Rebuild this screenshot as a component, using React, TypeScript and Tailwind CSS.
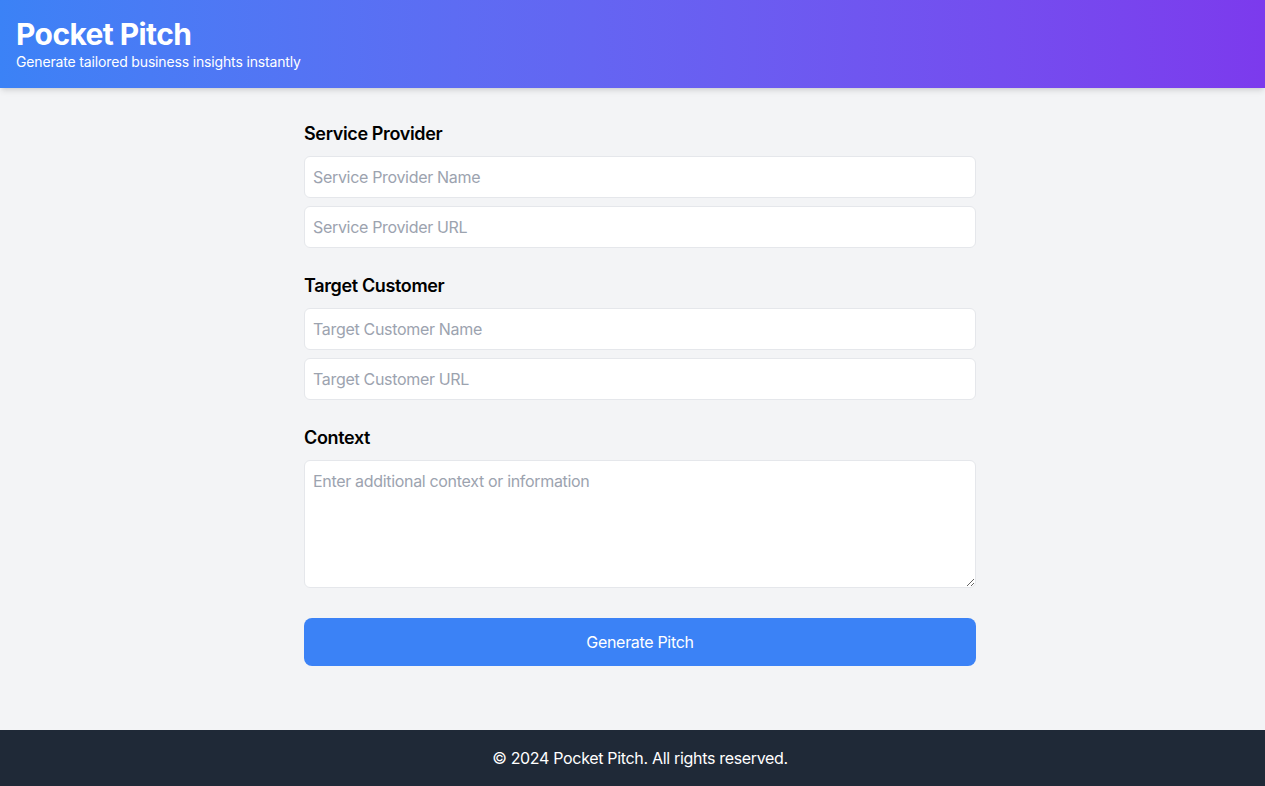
import React from "react";

export default function App() {
  const inputCls =
    "block w-full p-2 text-base leading-6 tracking-[-0.02em] bg-white border border-[#e5e7eb] rounded-md placeholder:text-[#9ca3af] text-gray-900 outline-none";
  const labelCls = "text-lg font-semibold leading-7 mb-2 text-black tracking-[-0.02em]";
  return (
    <div className="min-h-screen flex flex-col bg-[#f3f4f6] font-['Inter','Noto_Sans',sans-serif]">
      <header className="bg-gradient-to-r from-[#3b82f6] to-[#7c3aed] text-white p-4 shadow-md relative z-10">
        <h1 className="text-3xl font-bold leading-9 tracking-[-0.02em]">Pocket Pitch</h1>
        <p className="text-sm leading-5 tracking-[-0.011em]">Generate tailored business insights instantly</p>
      </header>
      <main className="flex-grow py-8 pl-[15px]">
        <div className="max-w-2xl mx-auto">
          <section className="mb-6">
            <h2 className={labelCls}>Service Provider</h2>
            <input className={inputCls + " mb-2"} placeholder="Service Provider Name" />
            <input className={inputCls} placeholder="Service Provider URL" />
          </section>
          <section className="mb-6">
            <h2 className={labelCls}>Target Customer</h2>
            <input className={inputCls + " mb-2"} placeholder="Target Customer Name" />
            <input className={inputCls} placeholder="Target Customer URL" />
          </section>
          <section className="mb-6">
            <h2 className={labelCls}>Context</h2>
            <textarea
              className="block w-full h-32 p-2 text-base leading-6 tracking-[-0.02em] bg-white border border-[#e5e7eb] rounded-md placeholder:text-[#9ca3af] outline-none"
              placeholder="Enter additional context or information"
            />
          </section>
          <button className="w-full mt-[6px] bg-[#3b82f6] text-white text-base leading-6 tracking-[-0.02em] py-3 rounded-lg">
            Generate Pitch
          </button>
        </div>
      </main>
      <footer className="bg-[#1f2937] text-white text-center py-4 pl-[15px] text-base leading-6 tracking-[-0.02em]">
        © 2024 Pocket Pitch. All rights reserved.
      </footer>
    </div>
  );
}
